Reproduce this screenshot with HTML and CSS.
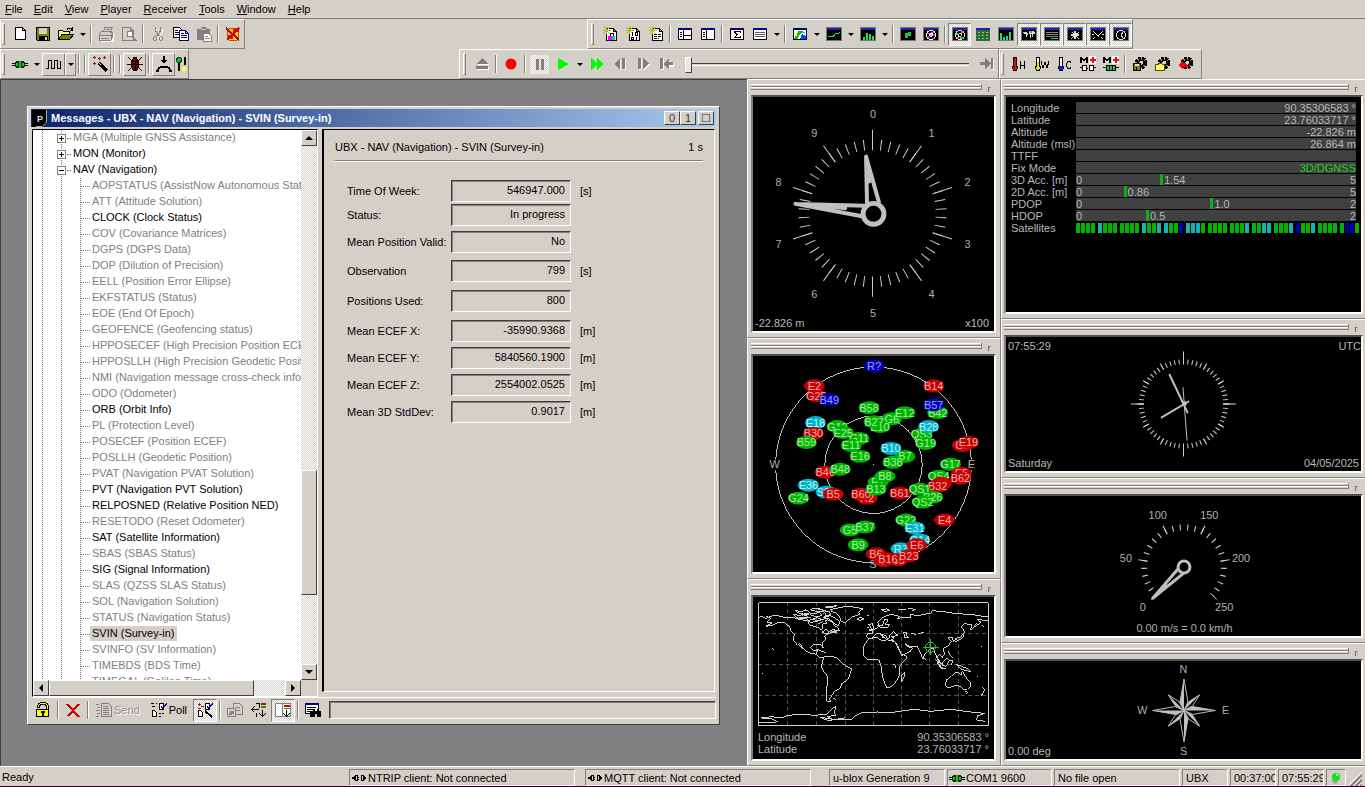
FILE: index.html
```html
<!DOCTYPE html>
<html lang="en">
<head>
<meta charset="utf-8">
<title>u-center</title>
<link rel="stylesheet" href="styles.css">
</head>
<body>
<svg class="sprite" aria-hidden="true">
  <symbol id="new" viewBox="0 0 16 16"><path fill="#fff" stroke="#000" d="M3.500 1.500h7l3 3v9h-10zM10.500 1.500v3h3"/></symbol>
  <symbol id="save" viewBox="0 0 16 16"><path fill="#808000" stroke="#000" d="M1.500 1.500h13v13h-12l-1-1z"/><path fill="#d4d0c8" d="M4 2h8v6H4z"/><path d="M4 10h9v5H4z"/><path fill="#d4d0c8" d="M10 11h2v3h-2z"/></symbol>
  <symbol id="open" viewBox="0 0 16 16"><path fill="#ffff80" stroke="#000" d="M.5 13.500v-9h4l1 1h6v3"/><path fill="#808000" stroke="#000" d="M.5 13.500l3.500-5h11.500l-4 5z"/><path fill="none" stroke="#000" d="M9 3.500c1-2 3-2 5 0M14.500 1v3H12"/></symbol>
  <symbol id="print" viewBox="0 0 16 16"><path fill="#fff" d="M1 8l3-2h10l2 2v6l-2 2H3l-2-2z"/><path fill="#d4d0c8" stroke="#808080" d="M5.500 5.500l1.500-4h7l-2 5M1.500 7.500l2-2h10l1 2v4l-2 3h-11zM1 9.500h12M3 12.500h8M13 8v5M7.500 3.500h4"/></symbol>
  <symbol id="preview" viewBox="0 0 16 16"><path fill="#d4d0c8" stroke="#808080" d="M1.500 1.500h8l3 3v10h-11zM9.500 1.500v3h3"/><circle cx="9" cy="8" r="3" fill="#fff" stroke="#808080"/><path stroke="#808080" stroke-width="2" d="M11 10l4 5"/></symbol>
  <symbol id="cut" viewBox="0 0 16 16"><path fill="none" stroke="#fff" d="M5 2l1 4 4 6M12 2l-1 4-5 6" transform="translate(1 1)"/><path fill="none" stroke="#808080" d="M5.500 1v4l4 5M10.500 1v4l-4 5"/><g fill="none" stroke="#808080"><ellipse cx="5" cy="12.500" rx="1.500" ry="2"/><ellipse cx="11" cy="12.500" rx="1.500" ry="2"/></g></symbol>
  <symbol id="copy" viewBox="0 0 16 16"><path fill="#fff" stroke="#000" d="M.5 1.500h6l2 2v8h-8z"/><path stroke="#000" d="M2 4.500h3M2 6.500h5M2 8.500h5"/><path fill="#fff" stroke="#000080" d="M6.500 4.500h6l3 3v7h-9zM12.500 4.500v3h3"/><path stroke="#000080" d="M8 7.500h3M8 9.500h6M8 11.500h6"/></symbol>
  <symbol id="paste" viewBox="0 0 16 16"><path fill="#808080" d="M1 3h3l2-2h3l2 2h3v5H9v6H1z"/><path fill="#d4d0c8" d="M5 3h5v1H5z"/><path fill="#fff" stroke="#808080" d="M7.500 7.500h5l3 3v5h-8zM9 10.500h3M9 12.500h5"/></symbol>
  <symbol id="clear" viewBox="0 0 16 16"><path fill="#ffd800" stroke="#a06000" d="M2.500 4.500l2-2h7l2 2v8l-2 2h-7l-2-2z"/><path fill="#f00" d="M8 3h6v3H8zM3 9h5v4H3z"/><path stroke="#d00000" stroke-width="2" d="M1 2l13 12M14 2L2 14"/></symbol>
  <symbol id="plug" viewBox="0 0 16 16"><path stroke="#000" d="M0 7.500h16M0 9.500h16"/><path fill="#003800" d="M4 5h8v7H4zM3 6h10v5H3z"/><path fill="#30b040" d="M4 7h2v3H4zM7 5h2v7H7zM10 7h2v3h-2z"/></symbol>
  <symbol id="wave" viewBox="0 0 16 16"><path fill="none" stroke="#000" d="M0 12.500h2.500v-8h3v8h3v-8h3v8h3v-8"/></symbol>
  <symbol id="wand" viewBox="0 0 16 16"><path stroke="#000" stroke-width="3" d="M7 7l8 8"/><path fill="#fff" d="M7 7h1v1h1v1H8V8H7z"/><path fill="none" stroke="#802020" d="M2 0v3M.5 1.500h3M7 1v3M5.500 2.500h3M12 0v3M10.500 1.500h3M2 6v3M.5 7.500h3"/></symbol>
  <symbol id="bug" viewBox="0 0 16 16"><path stroke="#000" d="M1 1l4 4M15 1l-4 4M0 8.500h4M12 8.500h4M1 15l4-4M15 15l-4-4"/><path fill="#800000" stroke="#000" d="M5.500 4.500l1-3h3l1 3 1 2v5l-2 3h-3l-2-3v-5zM4.500 8.500h7M8.500 5v9M5 5.500h6"/></symbol>
  <symbol id="tray" viewBox="0 0 16 16"><path d="M7 0h2v4H7zM5 4h6v1h-1v1H9v1H7V6H6V5H5z"/><path d="M4 10h8v2H4zM2 11h2v2H2zM12 11h2v2h-2zM0 14h3v2H0zM13 14h3v2h-3zM1 13h2v1H1zM13 13h2v1h-2z"/></symbol>
  <symbol id="keys" viewBox="0 0 16 16"><path stroke="#000" stroke-width="2" d="M4 2v13M10 1v8"/><circle cx="4" cy="4" r="2.500" fill="#30b040" stroke="#004000"/><circle cx="9" cy="13" r="2.500" fill="#ff4"/></symbol>
  <symbol id="newpkt" viewBox="0 0 16 16"><path fill="#fff" stroke="#000" d="M4.500 2.500h7l3 3v9h-10zM11.500 2.500v3h3"/><path fill="none" stroke="#b8b820" d="M4.500 0v8M.5 4.500h8M1 1l7 7M8 1L1 8"/></symbol>
  <symbol id="newmsg" viewBox="0 0 16 16"><use href="#newpkt"/><path fill="none" stroke="#000" d="M8.500 10V7.500h3V10"/><path fill="#f0f" d="M6 10h4v4H6z"/><path fill="#0cc" d="M10 10h3v4h-3z"/></symbol>
  <symbol id="newbin" viewBox="0 0 16 16"><use href="#newpkt"/><path fill="none" stroke="#000" d="M7.500 6v4M10.500 6.500h2v3h-2zM6.500 11.500h2v2h-2zM11.500 11v3"/></symbol>
  <symbol id="newtxt" viewBox="0 0 16 16"><use href="#newpkt"/><path stroke="#000" stroke-dasharray="3 1" d="M6 8.500h7M6 10.500h7M6 12.500h5"/></symbol>
  <symbol id="win" viewBox="0 0 16 16"><path fill="#fff" stroke="#000" d="M1.500 2.500h13v11h-13z"/><path fill="#000090" d="M1 2h14v2H1z"/></symbol>
  <symbol id="split" viewBox="0 0 16 16"><use href="#win"/><path stroke="#000" d="M6.500 4v9M7 9.500h8M3 6.500h2M3 8.500h2M3 10.500h2"/></symbol>
  <symbol id="side" viewBox="0 0 16 16"><use href="#win"/><path stroke="#000" d="M6.500 4v9M3 6.500h2M3 8.500h2M3 10.500h2"/></symbol>
  <symbol id="sum" viewBox="0 0 16 16"><use href="#win"/><path d="M5 5h7v2h-1V6H7v1h1v1h1v1H8v1H7v1h4v-1h1v2H5v-1h1v-1h1V8H6V7H5z"/></symbol>
  <symbol id="list" viewBox="0 0 16 16"><use href="#win"/><path stroke="#606060" d="M3 6.500h10M3 8.500h10M3 10.500h10"/></symbol>
  <symbol id="dark" viewBox="0 0 16 16"><path stroke="#777" d="M.5 1.500h15v13H.5z"/><path fill="#2020b0" d="M1 2h14v2H1z"/></symbol>
  <symbol id="mapc" viewBox="0 0 16 16"><use href="#win"/><path fill="#20b020" d="M2 13l4-8h5l-4 4-1 4z"/><path fill="#ff0" d="M3 10l2-4h1l-2 5z"/><path fill="#04f" d="M8 13l2-5 4 2v3z"/><path fill="#0cc" d="M10 6h3v1h-3z"/></symbol>
  <symbol id="line" viewBox="0 0 16 16"><use href="#dark"/><path fill="none" stroke="#20e050" d="M2 11l3-1 2 1 3-4 2 1 2-2"/></symbol>
  <symbol id="hist" viewBox="0 0 16 16"><use href="#dark"/><path stroke="#20e050" stroke-width="2" d="M4 14v-3M7 14V7M10 14V8M13 14v-4"/></symbol>
  <symbol id="cam" viewBox="0 0 16 16"><use href="#dark"/><path fill="#20c040" d="M5 7h3V6h3v4H8v2H5z"/><path stroke="#0cc" d="M6 8.500h2"/></symbol>
  <symbol id="sky" viewBox="0 0 16 16"><use href="#dark"/><circle cx="8" cy="9" r="4.500" fill="none" stroke="#ddd"/><circle cx="8" cy="9" r="1.500" fill="none" stroke="#ddd"/><path stroke="#20e050" stroke-width="2" d="M4 8h2M8 12h4"/><path stroke="#f44" stroke-width="2" d="M9 6h2M5 12h2"/></symbol>
  <symbol id="skyr" viewBox="0 0 16 16"><use href="#dark"/><circle cx="8" cy="9" r="4.500" fill="#000" stroke="#fff"/><circle cx="8" cy="9" r="2" fill="#fff"/><path stroke="#f44" d="M4 7.500h3M9 12.500h3M8 6.500h3M7 9.500h2"/><path stroke="#44f" stroke-width="2" d="M5 11h2M10 9h2"/></symbol>
  <symbol id="grid" viewBox="0 0 16 16"><path fill="#207030" stroke="#555" d="M1.500 2.500h13v12h-13z"/><path fill="#2020b0" d="M1 2h14v2H1z"/><path stroke="#7c8" stroke-dasharray="2 2" d="M3 6.500h10M3 9.500h10M3 12.500h10"/><path fill="#c33" d="M7 7h2v2H7z"/></symbol>
  <symbol id="bars" viewBox="0 0 16 16"><use href="#dark"/><path stroke="#20e050" stroke-width="2" d="M3 14V7M6 14v-3M12 14V6"/><path stroke="#2cc" stroke-width="2" d="M9 14v-4"/></symbol>
  <symbol id="world" viewBox="0 0 16 16"><use href="#dark"/><path fill="#ddd" d="M2 6h4v1h1v2H6v2H5V8H3V7H2zM8 5h5v1h1v2h-2v3h-1V8h-1v4H9V8H8z"/><path fill="#2c4" d="M9 5h2v2H9z"/></symbol>
  <symbol id="rows" viewBox="0 0 16 16"><use href="#dark"/><path stroke="#888" d="M2 6.500h12M2 8.500h12M2 10.500h12"/><path stroke="#2d4" d="M7 12.500h7"/></symbol>
  <symbol id="rose" viewBox="0 0 16 16"><use href="#dark"/><path fill="#ddd" d="M8 3l1 4 3-1-2 2 4 1-4 1 2 3-3-2-1 4-1-4-3 2 2-3-4-1 4-1-2-2 3 1z"/></symbol>
  <symbol id="dial" viewBox="0 0 16 16"><use href="#dark"/><path stroke="#ddd" d="M3 5l5 5M13 5l-5 5M3 13l2-2M13 13l-2-2M8.500 10v1M2 8.500h2M12 8.500h2"/></symbol>
  <symbol id="clock" viewBox="0 0 16 16"><use href="#dark"/><circle cx="8" cy="9" r="4.500" fill="none" stroke="#ddd"/><path fill="none" stroke="#ddd" d="M10 6L8 9l2 3"/></symbol>
  <symbol id="eject" viewBox="0 0 16 16"><path fill="#fff" d="M3 9l6-6 6 6zM3 11h12v3H3z"/><path fill="#808080" d="M2 8l6-6 6 6zM2 10h12v3H2z"/></symbol>
  <symbol id="rec" viewBox="0 0 16 16"><circle cx="8" cy="8" r="5.500" fill="#f00"/></symbol>
  <symbol id="pause" viewBox="0 0 16 16"><path fill="#808080" d="M4 3h3v11H4zM9 3h3v11H9z"/></symbol>
  <symbol id="play" viewBox="0 0 16 16"><path fill="#0f0" d="M3 2l11 6-11 6z"/></symbol>
  <symbol id="ff" viewBox="0 0 16 16"><path fill="#0f0" d="M2 2l6 5V2l6 6-6 6V9l-6 5z"/></symbol>
  <symbol id="back" viewBox="0 0 16 16"><path fill="#fff" d="M9 14L3 9l6-6zM11 3h3v11h-3z"/><path fill="#808080" d="M8 13L2 8l6-6zM10 2h3v11h-3z"/></symbol>
  <symbol id="fwd" viewBox="0 0 16 16"><path fill="#fff" d="M4 3h3v11H4zM9 14V3l6 6z"/><path fill="#808080" d="M3 2h3v11H3zM8 13V2l6 6z"/></symbol>
  <symbol id="home" viewBox="0 0 16 16"><path fill="#fff" d="M3 3h3v11H3zM7 9l5-5v3h4v4h-4v3z"/><path fill="#808080" d="M2 2h3v11H2zM5 8l6-6v4h4v3h-4v4z"/></symbol>
  <symbol id="end" viewBox="0 0 16 16"><path fill="#fff" d="M13 3h2v11h-2z"/><path fill="#808080" d="M12 2h2v11h-2zM12 8L6 2v4H1v3h5v4z"/></symbol>
  <symbol id="thot" viewBox="0 0 16 16"><path fill="#d01010" stroke="#000" d="M2.500 1.500h3v8l1 2-1 3h-3l-1-3 1-2z"/><path fill="none" stroke="#000" d="M9.500 5v8M13.500 5v8M9 9.500h5"/></symbol>
  <symbol id="twarm" viewBox="0 0 16 16"><path fill="#e8e020" stroke="#000" d="M2.500 1.500h3v8l1 2-1 3h-3l-1-3 1-2z"/><path fill="#fff" d="M3 2h2v4H3z"/><path fill="none" stroke="#000" d="M7 5l2 7 2-6 2 6 2-7"/></symbol>
  <symbol id="tcold" viewBox="0 0 16 16"><path fill="#fff" stroke="#000" d="M2.500 1.500h3v8l1 2-1 3h-3l-1-3 1-2z"/><path fill="#1020c0" d="M2 10h4v4H2z"/><path fill="none" stroke="#000" d="M14 6.500l-1-1h-2l-1.500 2v3l1.500 2h2l1-1"/></symbol>
  <symbol id="mred" viewBox="0 0 16 16"><path d="M0 1h2v1h1v1h2V2h1V1h2v6H6V4H5v1H3V4H2v3H0z"/><path fill="#fff" d="M9 0h7v8H9z"/><path fill="#f00" d="M12 1h2v2h2v2h-2v2h-2V5h-2V3h2z"/></symbol>
  <symbol id="moff" viewBox="0 0 16 16"><use href="#mred"/><path fill="#fff" stroke="#000" d="M0 11.500h3M2.500 9.500h4v5h-4zM9.500 9.500h4v5h-4zM13 11.500h3M6 12.500h2"/></symbol>
  <symbol id="mon" viewBox="0 0 16 16"><use href="#mred"/><path fill="#2b4" stroke="#000" d="M0 11.500h3M13 11.500h3M3.500 9.500h9v5h-9zM6.500 9v6M9.500 9v6"/></symbol>
  <symbol id="gear" viewBox="0 0 16 16"><circle cx="9" cy="7" r="5" fill="#888" stroke="#000" stroke-width="3" stroke-dasharray="3 1"/><circle cx="9" cy="7" r="2.500" fill="#d4d0c8" stroke="#000"/></symbol>
  <symbol id="gsave" viewBox="0 0 16 16"><use href="#gear"/><path fill="#808000" stroke="#000" d="M1.500 7.500h7v7h-7zM4.500 11v3"/><path fill="#ddd" d="M3 8h4v2H3z"/></symbol>
  <symbol id="gopen" viewBox="0 0 16 16"><use href="#gear"/><path fill="#ffff60" stroke="#555500" d="M.5 8.500h3l1-1h2l1 1h2v6h-9z"/></symbol>
  <symbol id="gback" viewBox="0 0 16 16"><use href="#gear"/><path fill="#f00" d="M0 9l5-4v2h3l3 6-4-2H5v2z"/></symbol>
  <symbol id="lock" viewBox="0 0 16 16"><path fill="#000" d="M5 0h6v1h2v2h1v5h-3V4h-1V3H6v1H5v2H2V3h1V1h2z"/><path fill="#ff0" d="M5 1h6v1h1v1h1v5h-1V3h-1V2H5v1H4v2H3V3h1V2h1z"/><path fill="#ff0" stroke="#000" d="M1.500 7.500h12v7h-12z"/><path d="M6 9h4v2H9v3H7v-3H6z"/></symbol>
  <symbol id="del" viewBox="0 0 16 16"><path stroke="#d00000" stroke-width="2" d="M2 2l12 13M14 2L3 14"/></symbol>
  <symbol id="send" viewBox="0 0 16 16"><path fill="#d4d0c8" stroke="#808080" d="M5.500 1.500h7l3 3v10h-10zM7 4.500h5M7 6.500h6M7 8.500h6M7 10.500h6M7 12.500h6M0 2.500h3M1 5.500h3M0 8.500h4M1 11.500h3M0 14.500h3"/></symbol>
  <symbol id="poll" viewBox="0 0 16 16"><path fill="none" stroke="#000" stroke-dasharray="3 2" d="M0 1.500h6M1 4.500h5"/><path fill="#fff" stroke="#000" d="M1.500 8.500h2l2 2v4h-4zM8.500 1.500h4v6h-4z"/><path fill="#0000a0" d="M10 4h1v1h1V4h1V3h1V2h1V1h1v2h-1v1h-1v1h-1v1h-1v1h-1V6h-1z"/><path stroke="#000" stroke-dasharray="2 1" d="M8 11.500h6M8 14.500h3"/></symbol>
  <symbol id="auto" viewBox="0 0 16 16"><path fill="#fff" stroke="#000" d="M1.500 8.500h2l2 2v4h-4zM8.500 1.500h4v6h-4z"/><path fill="#0000a0" d="M10 4h1v1h1V4h1V3h1V2h1V1h1v2h-1v1h-1v1h-1v1h-1v1h-1V6h-1z"/><path stroke="#000" stroke-width="2" d="M8 9l7 6"/><path stroke="#802020" d="M1 2.500h3M4 4.500h3M1 6.500h3M2.500 1v3"/></symbol>
  <symbol id="multi" viewBox="0 0 16 16"><path fill="#d4d0c8" stroke="#808080" d="M6.500 1.500h6l3 3v8h-9zM9 5.500h4M9 8.500h4"/><path fill="#d4d0c8" stroke="#808080" d="M.5 6.500h8v8h-8z"/><path fill="#808080" d="M3 9h4v3H5v1H2v-2h1z"/></symbol>
  <symbol id="insert" viewBox="0 0 16 16"><path fill="none" stroke="#000" d="M8.500 1v5M5 1.500h3M0 7.500h8M3.500 4.500l-3 3 3 3M11.500 8v7M8.500 11.500l3 3 3-3M5 10.500v4"/><path stroke="#d00" stroke-width="2" d="M10 2h5"/><path stroke="#0a0" stroke-width="2" d="M10 5h5"/></symbol>
  <symbol id="append" viewBox="0 0 16 16"><path fill="#fff" stroke="#808080" d="M.5 1.500h15v13H.5zM7.500 1v13"/><path stroke="#d00" stroke-width="2" d="M9 4h6"/><path stroke="#0a0" d="M9 6.500h6"/><path fill="none" stroke="#000" d="M11.500 8v7M8.500 11.500l3 3 3-3"/></symbol>
  <symbol id="find" viewBox="0 0 16 16"><path fill="#fff" stroke="#000" d="M.5 1.500h13v10H.5z"/><path fill="#000080" d="M0 1h14v2H0z"/><path stroke="#000" d="M2 5.500h9M2 7.500h6M2 9.500h3"/><path d="M5 9h3V7h2v2h2V7h2v2h2v6h-4v-3h-2v3H5z"/></symbol>
  <symbol id="unplug" viewBox="0 0 16 16"><path d="M1 7h2V6h1V5h2v1H5v4h1v1H4v-1H3V9H1zM6 5h1v2h1v1H7v1h1v1H7v1H6zM10 5h1v6h-1zM11 5h2v1h1v1h1v2h-1v1h-1v1h-2v-1h1V6h-1z"/></symbol>
  <symbol id="led" viewBox="0 0 16 16"><path fill="#9a9" d="M3 10l3 4 4-1-2-4z"/><circle cx="8" cy="7" r="4" fill="#10e020"/><path fill="#cfc" d="M8 4h2v2H8z"/></symbol>
  <symbol id="sat" overflow="visible"><ellipse rx="10.500" ry="6.500"/></symbol>
</svg>

<nav class="menu">
  <button><u>F</u>ile</button><button><u>E</u>dit</button><button><u>V</u>iew</button><button><u>P</u>layer</button><button><u>R</u>eceiver</button><button><u>T</u>ools</button><button><u>W</u>indow</button><button><u>H</u>elp</button>
</nav>

<div class="bars">
  <div class="bar" role="toolbar" aria-label="File">
    <i class="grip"></i>
    <button class="tb" aria-label="New"><svg><use href="#new"/></svg></button>
    <button class="tb" aria-label="Save"><svg><use href="#save"/></svg></button>
    <button class="tb" aria-label="Open"><svg><use href="#open"/></svg></button><button class="drop" aria-label="Recent"></button>
    <i class="sep"></i>
    <button class="tb" aria-label="Print"><svg><use href="#print"/></svg></button>
    <button class="tb" aria-label="Preview"><svg><use href="#preview"/></svg></button>
    <i class="sep"></i>
    <button class="tb" aria-label="Cut"><svg><use href="#cut"/></svg></button>
    <button class="tb" aria-label="Copy"><svg><use href="#copy"/></svg></button>
    <button class="tb" aria-label="Paste"><svg><use href="#paste"/></svg></button>
    <i class="sep"></i>
    <button class="tb" aria-label="Clear"><svg><use href="#clear"/></svg></button>
  </div>
  <div class="bar views" role="toolbar" aria-label="Views">
    <i class="grip"></i>
    <button class="tb" aria-label="Packet console"><svg><use href="#newmsg"/></svg></button>
    <button class="tb" aria-label="Binary console"><svg><use href="#newbin"/></svg></button>
    <button class="tb" aria-label="Text console"><svg><use href="#newtxt"/></svg></button>
    <i class="sep"></i>
    <button class="tb" aria-label="Messages"><svg><use href="#split"/></svg></button>
    <button class="tb" aria-label="Configuration"><svg><use href="#side"/></svg></button>
    <i class="sep"></i>
    <button class="tb" aria-label="Statistics"><svg><use href="#sum"/></svg></button>
    <button class="tb" aria-label="Table"><svg><use href="#list"/></svg></button><button class="drop" aria-label="Table list"></button>
    <i class="sep"></i>
    <button class="tb" aria-label="Map"><svg><use href="#mapc"/></svg></button><button class="drop" aria-label="Map list"></button>
    <button class="tb" aria-label="Chart"><svg><use href="#line"/></svg></button><button class="drop" aria-label="Chart list"></button>
    <button class="tb" aria-label="Histogram"><svg><use href="#hist"/></svg></button><button class="drop" aria-label="Histogram list"></button>
    <i class="sep"></i>
    <button class="tb" aria-label="Camera"><svg><use href="#cam"/></svg></button>
    <button class="tb" aria-label="Deviation"><svg><use href="#skyr"/></svg></button>
    <i class="sep"></i>
    <button class="tb on" aria-label="Sky"><svg><use href="#sky"/></svg></button>
    <button class="tb" aria-label="Signals"><svg><use href="#grid"/></svg></button>
    <button class="tb" aria-label="Levels"><svg><use href="#bars"/></svg></button>
    <button class="tb on" aria-label="World"><svg><use href="#world"/></svg></button>
    <button class="tb on" aria-label="Data"><svg><use href="#rows"/></svg></button>
    <button class="tb on" aria-label="Compass"><svg><use href="#rose"/></svg></button>
    <button class="tb on" aria-label="Speed"><svg><use href="#dial"/></svg></button>
    <button class="tb on" aria-label="Clock"><svg><use href="#clock"/></svg></button>
  </div>
</div>

<div class="bars">
  <div class="bar" role="toolbar" aria-label="Connection">
    <i class="grip"></i>
    <button class="tb" aria-label="Connect"><svg><use href="#plug"/></svg></button><button class="drop" aria-label="Ports"></button>
    <button class="tb up" aria-label="Baud rate"><svg><use href="#wave"/></svg></button><button class="drop up" aria-label="Baud rates"></button>
    <i class="sep"></i><i class="sep"></i>
    <button class="tb up" aria-label="Autobaud"><svg><use href="#wand"/></svg></button>
    <i class="sep"></i><i class="sep"></i>
    <button class="tb up" aria-label="Debug"><svg><use href="#bug"/></svg></button>
    <i class="sep"></i>
    <button class="tb up" aria-label="Download"><svg><use href="#tray"/></svg></button>
    <button class="tb half" aria-label="Settings"><svg><use href="#keys"/></svg></button>
  </div>
  <div class="bar player" role="toolbar" aria-label="Player">
    <i class="grip"></i>
    <button class="tb" aria-label="Eject"><svg><use href="#eject"/></svg></button>
    <i class="sep"></i>
    <button class="tb" aria-label="Record"><svg class="smooth"><use href="#rec"/></svg></button>
    <i class="sep"></i>
    <button class="tb pressed" aria-label="Pause"><svg><use href="#pause"/></svg></button>
    <button class="tb" aria-label="Play"><svg><use href="#play"/></svg></button><button class="drop" aria-label="Play speed"></button>
    <button class="tb" aria-label="Fast forward"><svg><use href="#ff"/></svg></button>
    <button class="tb" aria-label="Step back"><svg><use href="#back"/></svg></button>
    <button class="tb" aria-label="Step forward"><svg><use href="#fwd"/></svg></button>
    <button class="tb" aria-label="To start"><svg><use href="#home"/></svg></button>
    <input class="seek" type="range" value="0" aria-label="Position">
    <button class="tb" aria-label="To end"><svg><use href="#end"/></svg></button>
  </div>
  <div class="bar starts" role="toolbar" aria-label="Receiver">
    <i class="grip"></i>
    <button class="tb" aria-label="Hot start"><svg><use href="#thot"/></svg></button>
    <button class="tb" aria-label="Warm start"><svg><use href="#twarm"/></svg></button>
    <button class="tb" aria-label="Cold start"><svg><use href="#tcold"/></svg></button>
    <button class="tb" aria-label="Store offline"><svg><use href="#moff"/></svg></button>
    <button class="tb" aria-label="Store online"><svg><use href="#mon"/></svg></button>
    <i class="sep"></i>
    <button class="tb" aria-label="Save configuration"><svg><use href="#gsave"/></svg></button>
    <button class="tb" aria-label="Load configuration"><svg><use href="#gopen"/></svg></button>
    <button class="tb" aria-label="Revert configuration"><svg><use href="#gback"/></svg></button>
  </div>
</div>

<main class="work">
  <div class="desk">
    <section class="window">
      <header class="title">
        <svg class="logo" viewBox="0 0 15 17"><path d="M0 0h15v12l-4 5H0z"/><path fill="none" stroke="#aaa" d="M14.500 0v12l-4 4.500H4"/><text x="5" y="12">P</text></svg>
        <h1>Messages - UBX - NAV (Navigation) - SVIN (Survey-in)</h1>
        <button>0</button><button>1</button><button class="close">☐</button>
      </header>
      <div class="panes">
        <div class="treebox">
          <div class="clip">
            <ul class="tree">
              <li class="off"><b class="plus"></b>MGA (Multiple GNSS Assistance)</li>
              <li><b class="plus"></b>MON (Monitor)</li>
              <li><b></b>NAV (Navigation)</li>
              <li class="branch"><ul>
                <li class="off">AOPSTATUS (AssistNow Autonomous Status)</li>
                <li class="off">ATT (Attitude Solution)</li>
                <li>CLOCK (Clock Status)</li>
                <li class="off">COV (Covariance Matrices)</li>
                <li class="off">DGPS (DGPS Data)</li>
                <li class="off">DOP (Dilution of Precision)</li>
                <li class="off">EELL (Position Error Ellipse)</li>
                <li class="off">EKFSTATUS (Status)</li>
                <li class="off">EOE (End Of Epoch)</li>
                <li class="off">GEOFENCE (Geofencing status)</li>
                <li class="off">HPPOSECEF (High Precision Position ECEF)</li>
                <li class="off">HPPOSLLH (High Precision Geodetic Position)</li>
                <li class="off">NMI (Navigation message cross-check information)</li>
                <li class="off">ODO (Odometer)</li>
                <li>ORB (Orbit Info)</li>
                <li class="off">PL (Protection Level)</li>
                <li class="off">POSECEF (Position ECEF)</li>
                <li class="off">POSLLH (Geodetic Position)</li>
                <li class="off">PVAT (Navigation PVAT Solution)</li>
                <li>PVT (Navigation PVT Solution)</li>
                <li>RELPOSNED (Relative Position NED)</li>
                <li class="off">RESETODO (Reset Odometer)</li>
                <li>SAT (Satellite Information)</li>
                <li class="off">SBAS (SBAS Status)</li>
                <li>SIG (Signal Information)</li>
                <li class="off">SLAS (QZSS SLAS Status)</li>
                <li class="off">SOL (Navigation Solution)</li>
                <li class="off">STATUS (Navigation Status)</li>
                <li><span class="sel">SVIN (Survey-in)</span></li>
                <li class="off">SVINFO (SV Information)</li>
                <li class="off">TIMEBDS (BDS Time)</li>
                <li class="off">TIMEGAL (Galileo Time)</li>
              </ul></li>
            </ul>
          </div>
          <div class="vscroll"><button class="arrow up-a" aria-label="Up"></button><i class="thumb"></i><button class="arrow down-a" aria-label="Down"></button></div>
          <div class="hscroll"><button class="arrow left-a" aria-label="Left"></button><i class="thumb"></i><button class="arrow right-a" aria-label="Right"></button></div>
        </div>
        <form class="detail">
          <div class="head"><span>UBX - NAV (Navigation) - SVIN (Survey-in)</span><span>1 s</span></div>
          <div class="fields">
            <div class="row r24"><label for="tow">Time Of Week:</label><input id="tow" readonly value="546947.000"><span>[s]</span></div>
            <div class="row"><label for="st">Status:</label><input id="st" readonly value="In progress"></div>
            <div class="row r29"><label for="mpv">Mean Position Valid:</label><input id="mpv" readonly value="No"></div>
            <div class="row r30"><label for="obs">Observation</label><input id="obs" readonly value="799"><span>[s]</span></div>
            <div class="row r30"><label for="pu">Positions Used:</label><input id="pu" readonly value="800"></div>
            <div class="row"><label for="ex">Mean ECEF X:</label><input id="ex" readonly value="-35990.9368"><span>[m]</span></div>
            <div class="row"><label for="ey">Mean ECEF Y:</label><input id="ey" readonly value="5840560.1900"><span>[m]</span></div>
            <div class="row"><label for="ez">Mean ECEF Z:</label><input id="ez" readonly value="2554002.0525"><span>[m]</span></div>
            <div class="row"><label for="sd">Mean 3D StdDev:</label><input id="sd" readonly value="0.9017"><span>[m]</span></div>
          </div>
        </form>
      </div>
      <footer class="wbar">
        <button class="tb" aria-label="Lock"><svg><use href="#lock"/></svg></button>
        <i class="sep"></i>
        <button class="tb" aria-label="Delete"><svg><use href="#del"/></svg></button>
        <i class="sep"></i>
        <button class="tb text dim"><svg><use href="#send"/></svg>Send</button>
        <button class="tb text"><svg><use href="#poll"/></svg>Poll</button>
        <button class="tb on" aria-label="Auto poll"><svg><use href="#auto"/></svg></button>
        <i class="sep"></i>
        <button class="tb" aria-label="Multiple"><svg><use href="#multi"/></svg></button>
        <button class="tb" aria-label="Insert"><svg><use href="#insert"/></svg></button>
        <button class="tb on" aria-label="Append"><svg><use href="#append"/></svg></button>
        <i class="sep"></i>
        <button class="tb" aria-label="Find"><svg><use href="#find"/></svg></button>
        <input class="query" aria-label="Search">
      </footer>
    </section>
  </div>

  <div class="dock narrow">
    <section class="panel p258">
      <header><i></i><button>r</button></header>
      <div class="face">
        <svg class="draw" viewBox="753 97 241 235">
          <g class="lbl"><text x="873" y="118">0</text><text x="932" y="137">1</text><text x="968" y="187">2</text><text x="968" y="249">3</text><text x="932" y="299">4</text><text x="873" y="318">5</text><text x="814" y="299">6</text><text x="778" y="249">7</text><text x="778" y="187">8</text><text x="814" y="137">9</text></g>
          <g transform="translate(872.500 214) rotate(-90)" class="ticks"><circle r="69" stroke-width="11" pathLength="500" stroke-dasharray="1.100 8.900" stroke-dashoffset=".55"/><circle r="74" stroke-width="20" pathLength="500" stroke-dasharray="1 49" stroke-dashoffset=".5"/></g>
          <g class="hand"><path d="M795 204.500L865 206.500M795 204.500L862 217M820 206L845 209M866 157L867 204M866 157L879 203M867 168L869 182" stroke-width="4"/><circle cx="873.500" cy="214.500" r="10.500" fill="#000" stroke-width="5"/></g>
        </svg>
        <span class="bl">-22.826 m</span><span class="br inset">x100</span>
      </div>
    </section>
    <section class="panel p242">
      <header><i></i><button>r</button></header>
      <div class="face">
        <svg class="draw" viewBox="753 356 241 218">
          <g class="ring"><circle cx="873.500" cy="465.500" r="98.500"/><circle cx="873.500" cy="465.500" r="49"/><path d="M873 465.500h1"/></g>
          <g class="lbl"><rect x="767" y="460" width="13" height="11"/><text x="774" y="469">W</text><rect x="967" y="460" width="10" height="11"/><text x="972" y="469">E</text><text x="873" y="569">S</text></g>
          <g class="sats">
            <g class="r" transform="translate(816 396)"><use href="#sat"/><text y="4">G25</text></g>
            <g class="r" transform="translate(814 386)"><use href="#sat"/><text y="4">E2</text></g>
            <g class="b" transform="translate(829 400)"><use href="#sat"/><text y="4">B49</text></g>
            <g class="b" transform="translate(874 366)"><use href="#sat"/><text y="4">R?</text></g>
            <g class="r" transform="translate(934 386)"><use href="#sat"/><text y="4">B14</text></g>
            <g class="g" transform="translate(938 413)"><use href="#sat"/><text y="4">B42</text></g>
            <g class="b" transform="translate(934 405)"><use href="#sat"/><text y="4">B57</text></g>
            <g class="g" transform="translate(869 408)"><use href="#sat"/><text y="4">B58</text></g>
            <g class="g" transform="translate(892 419)"><use href="#sat"/><text y="4">G6</text></g>
            <g class="g" transform="translate(905 413)"><use href="#sat"/><text y="4">E12</text></g>
            <g class="g" transform="translate(880 427)"><use href="#sat"/><text y="4">E10</text></g>
            <g class="g" transform="translate(874 422)"><use href="#sat"/><text y="4">B27</text></g>
            <g class="c" transform="translate(815 423)"><use href="#sat"/><text y="4">E18</text></g>
            <g class="r" transform="translate(813 434)"><use href="#sat"/><text y="4">B30</text></g>
            <g class="g" transform="translate(806 443)"><use href="#sat"/><text y="4">B59</text></g>
            <g class="g" transform="translate(837 427)"><use href="#sat"/><text y="4">G12</text></g>
            <g class="g" transform="translate(859 439)"><use href="#sat"/><text y="4">G11</text></g>
            <g class="g" transform="translate(843 433)"><use href="#sat"/><text y="4">E25</text></g>
            <g class="g" transform="translate(851 446)"><use href="#sat"/><text y="4">E11</text></g>
            <g class="g" transform="translate(860 457)"><use href="#sat"/><text y="4">E16</text></g>
            <g class="g" transform="translate(922 435)"><use href="#sat"/><text y="4">QS3</text></g>
            <g class="c" transform="translate(929 427)"><use href="#sat"/><text y="4">B28</text></g>
            <g class="g" transform="translate(926 444)"><use href="#sat"/><text y="4">G19</text></g>
            <g class="r" transform="translate(963 446)"><use href="#sat"/><text y="4">G3</text></g>
            <g class="r" transform="translate(969 443)"><use href="#sat"/><text y="4">E19</text></g>
            <g class="g" transform="translate(905 457)"><use href="#sat"/><text y="4">B7</text></g>
            <g class="c" transform="translate(891 449)"><use href="#sat"/><text y="4">B10</text></g>
            <g class="g" transform="translate(893 463)"><use href="#sat"/><text y="4">B38</text></g>
            <g class="r" transform="translate(825 473)"><use href="#sat"/><text y="4">B46</text></g>
            <g class="g" transform="translate(840 470)"><use href="#sat"/><text y="4">B48</text></g>
            <g class="c" transform="translate(808 486)"><use href="#sat"/><text y="4">E36</text></g>
            <g class="c" transform="translate(826 493)"><use href="#sat"/><text y="4">S27</text></g>
            <g class="r" transform="translate(833 495)"><use href="#sat"/><text y="4">B5</text></g>
            <g class="g" transform="translate(798 499)"><use href="#sat"/><text y="4">G24</text></g>
            <g class="r" transform="translate(867 499)"><use href="#sat"/><text y="4">R2</text></g>
            <g class="r" transform="translate(861 495)"><use href="#sat"/><text y="4">B60</text></g>
            <g class="g" transform="translate(878 483)"><use href="#sat"/><text y="4">E7</text></g>
            <g class="g" transform="translate(885 477)"><use href="#sat"/><text y="4">B8</text></g>
            <g class="g" transform="translate(876 490)"><use href="#sat"/><text y="4">B13</text></g>
            <g class="r" transform="translate(900 494)"><use href="#sat"/><text y="4">B61</text></g>
            <g class="g" transform="translate(951 465)"><use href="#sat"/><text y="4">G17</text></g>
            <g class="g" transform="translate(939 477)"><use href="#sat"/><text y="4">QS4</text></g>
            <g class="r" transform="translate(962 474)"><use href="#sat"/><text y="4">E5</text></g>
            <g class="r" transform="translate(961 479)"><use href="#sat"/><text y="4">B62</text></g>
            <g class="r" transform="translate(942 484)"><use href="#sat"/></g>
            <g class="r" transform="translate(938 487)"><use href="#sat"/><text y="4">B32</text></g>
            <g class="g" transform="translate(920 490)"><use href="#sat"/><text y="4">QS1</text></g>
            <g class="g" transform="translate(933 498)"><use href="#sat"/><text y="4">B26</text></g>
            <g class="g" transform="translate(923 503)"><use href="#sat"/><text y="4">QS2</text></g>
            <g class="r" transform="translate(945 521)"><use href="#sat"/><text y="4">E4</text></g>
            <g class="g" transform="translate(850 531)"><use href="#sat"/><text y="4">G5</text></g>
            <g class="g" transform="translate(865 528)"><use href="#sat"/><text y="4">B37</text></g>
            <g class="g" transform="translate(858 546)"><use href="#sat"/><text y="4">B9</text></g>
            <g class="g" transform="translate(906 521)"><use href="#sat"/><text y="4">G22</text></g>
            <g class="c" transform="translate(915 529)"><use href="#sat"/><text y="4">E31</text></g>
            <g class="c" transform="translate(920 541)"><use href="#sat"/><text y="4">G14</text></g>
            <g class="c" transform="translate(901 550)"><use href="#sat"/><text y="4">R7</text></g>
            <g class="r" transform="translate(917 546)"><use href="#sat"/><text y="4">E6</text></g>
            <g class="r" transform="translate(876 555)"><use href="#sat"/><text y="4">B6</text></g>
            <g class="r" transform="translate(884 562)"><use href="#sat"/><text y="4">C</text></g>
            <g class="r" transform="translate(898 561)"><use href="#sat"/><text y="4">C5</text></g>
            <g class="r" transform="translate(888 560)"><use href="#sat"/><text y="4">B16</text></g>
            <g class="r" transform="translate(909 557)"><use href="#sat"/><text y="4">B23</text></g>
          </g>
        </svg>
      </div>
    </section>
    <section class="panel p187">
      <header><i></i><button>r</button></header>
      <div class="face mapface">
        <svg class="draw map" viewBox="39 75 696 375">
          <path class="mgrid" d="M128 76v374M215 76v374M302 76v374M386 76v374M470 76v374M557 76v374M644 76v374M40 169h696M40 262h696M40 355h696"/>
          <path class="coast" d="M40 122L50 118 64 124 76 117 100 116 125 122 150 122 165 128 190 130 205 126 215 130M64 117L76 124 66 136 82 138 62 148 84 144 100 135 120 138 133 148 140 165 148 172 146 190 158 205 164 198 172 210 182 222 195 228 215 232 225 243 238 240 M164 204L174 215M215 232L218 220 206 222 197 212 205 203 220 204 228 202 236 214 232 200 244 185 240 178 248 172 262 166 276 165 268 158 284 162 278 150 270 146 262 135 250 128 242 130 246 138 232 142 234 154 230 160 222 152 208 148 192 142 190 132M252 163l14-5 8 4-16 3M232 165l12-8 10 8-10 6zM205 222l14-4 16 6 8 3"/>
          <path class="coast" d="M150 100l20 4 12-6 14 8-14 6-20-4zM146 112l18 4 10-4 16 6-12 8-22-4zM196 98l12-4 22 2 8 6-20 2zM196 108l14 2 14-4 8 8-16 6-18-6zM240 92l24-2 12-4-28 2zM240 104l14-2 4 10-14 4zM204 124l14-2 10 4-10 8zM236 120l22-4 14 8 14 10-6 12-12-8-14-12zM170 118l8-8 14 2M158 106l30-8M150 126l26-6 24 2M212 132l20-4 12-4M220 140l14-6M184 124l14 12 12-2M220 96l24 6-10 8"/>
          <path class="coast" d="M258 97L285 92 300 88 330 90 355 95 342 104 346 112 322 120 302 136 290 134 284 118 276 108 262 104zM336 124l14-2 8 4-14 4zM410 98l18-3 8 5-16 3zM462 98l24-2M490 94l26 3-14 3M368 114l4 1"/>
          <path class="coast" d="M238 240L250 240 262 238 280 245 296 262 322 277 316 292 310 308 292 320 285 335 272 342 264 352 254 368 260 374 246 374 244 350 248 320 250 300 236 282 230 268 234 252 238 240M266 366l8 2M208 262h2M82 214l4 5M52 290h2M712 208h2"/>
          <path class="coast" d="M372 186L398 180 404 188 420 192 426 188 452 194 462 215 470 232 486 236 488 242 474 258 464 272 466 295 456 312 444 328 428 334 420 318 414 300 412 278 408 262 404 250 390 248 368 248 356 236 356 212 364 198zM472 296L482 286 480 300 470 316zM446 264h6v8"/>
          <path class="coast" d="M372 186L366 178 370 168 384 170 382 160 392 156 402 150 400 144 408 152 430 150 436 142 422 142 432 128 420 128 414 146 402 144 400 134 420 118 440 112 465 118 458 126 474 120 500 122 498 112 520 116 560 108 565 98 580 103 600 104 640 110 680 112 734 120M734 130L700 128 712 136 690 150 680 158 682 142 660 140 652 150 662 165 650 180 634 184 640 192M372 160L382 156 372 142 384 140 388 156 376 160zM368 152l6-2"/>
          <path class="coast" d="M384 182L392 172 404 168 416 182 424 184 408 170 424 176 430 186 436 182 436 174 448 164 462 176 440 178 450 184 440 188 452 194 460 204M478 165L488 168 486 174 492 182 480 180zM500 168l14 4M520 170l18-4M460 206L472 236 498 224 504 214 492 210 482 200 496 208 520 210 526 222 536 246 544 228 556 216 568 216 576 236 582 252 592 262 578 240 586 232 594 242 602 230 596 216 612 206 622 194 612 182 624 180 628 196 634 186M632 194l12-4 12-8 4-14M540 244l4 3"/>
          <path class="coast" d="M574 246L592 272 606 276 592 276 578 256M594 258L608 244 616 250 606 268 596 266zM612 222l4 12 8 8 4-2M618 250l8 2-6 12M636 262L652 268 672 276 678 284 662 280 650 276zM606 310L622 298 634 286 646 288 652 296 654 282 664 300 678 316 680 328 670 338 658 338 646 328 634 326 612 334 604 326zM662 344l9 3-6 4M716 332l8 8-4 4M720 344l-10 12 6-2M700 300l2 2M690 146l8-6M715 145l6 4"/>
          <path class="coast" d="M40 438L100 436 80 426 48 424 80 420 110 424 130 416 170 413 210 416 246 412 262 396 274 390 268 410 274 416 246 420 264 428 226 422 250 432 300 424 272 430 320 430 326 422 350 408 400 406 440 408 480 402 510 398 560 404 620 398 680 406 722 410 700 418 698 430 722 434"/>
          <path class="frame" d="M41 77h692v371H41z"/>
          <g class="target"><circle cx="559" cy="211" r="15"/><path d="M535 211h48M559 187v48"/></g>
        </svg>
        <dl class="pos"><div><dt>Longitude</dt><dd>90.35306583 °</dd></div><div><dt>Latitude</dt><dd>23.76033717 °</dd></div></dl>
      </div>
    </section>
  </div>

  <div class="dock wide">
    <section class="panel p240">
      <header><i></i><button>r</button></header>
      <div class="face dataface">
        <table class="data">
          <tr><th>Longitude</th><td class="v">90.35306583 °</td></tr>
          <tr><th>Latitude</th><td class="v">23.76033717 °</td></tr>
          <tr><th>Altitude</th><td class="v">-22.826 m</td></tr>
          <tr><th>Altitude (msl)</th><td class="v">26.864 m</td></tr>
          <tr><th>TTFF</th><td class="v"></td></tr>
          <tr><th>Fix Mode</th><td class="v fix">3D/DGNSS</td></tr>
          <tr><th>3D Acc. [m]</th><td><div class="rng"><span>0</span><em style="left:30%">1.54</em><span>5</span></div></td></tr>
          <tr><th>2D Acc. [m]</th><td><div class="rng"><span>0</span><em style="left:17%">0.86</em><span>5</span></div></td></tr>
          <tr><th>PDOP</th><td><div class="rng"><span>0</span><em style="left:48%">1.0</em><span>2</span></div></td></tr>
          <tr><th>HDOP</th><td><div class="rng"><span>0</span><em style="left:25%">0.5</em><span>2</span></div></td></tr>
          <tr><th>Satellites</th><td class="satrow"><div class="satbar">
            <span><i></i><i></i><i></i><i></i></span><span><i class="c"></i><i></i><i></i><i></i></span><span><i></i><i></i><i></i><i></i></span><span><i class="c"></i><i></i><i></i><i class="c"></i></span><span><i class="c"></i><i></i><i></i><i class="b"></i></span><span><i class="c"></i><i class="c"></i><i class="c"></i><i></i></span><span><i></i><i></i><i></i><i></i></span><span><i></i><i></i><i></i><i class="c"></i></span><span><i></i><i></i><i class="c"></i><i class="c"></i></span><span><i></i><i></i><i></i><i class="c"></i></span><span><i class="b"></i><i></i><i></i><i class="c"></i></span><span><i></i><i></i><i></i><i></i></span><span><i></i><i class="b"></i><i class="b"></i><i></i></span>
          </div></td></tr>
        </table>
      </div>
    </section>
    <section class="panel p159">
      <header><i></i><button>r</button></header>
      <div class="face">
        <svg class="draw" viewBox="1006 338 354 135">
          <g transform="translate(1183 405.500) rotate(-90)" class="ticks"><circle r="42.500" stroke-width="5" pathLength="600" stroke-dasharray="2.200 7.800" stroke-dashoffset="1.100"/><circle r="43.500" stroke-width="7" pathLength="600" stroke-dasharray="2.200 47.800" stroke-dashoffset="1.100"/><circle r="46.500" stroke-width="13" pathLength="600" stroke-dasharray="2 148" stroke-dashoffset="1"/></g>
          <g class="hand"><path stroke-width="2" d="M1161 419L1188 403M1169 376L1187 414"/><path stroke-width="1" d="M1182.500 389L1186.500 442"/><circle cx="1184" cy="405" r="2" stroke-width="1" fill="#c0c0c0"/></g>
        </svg>
        <span class="tl">07:55:29</span><span class="tr">UTC</span><span class="bl">Saturday</span><span class="br">04/05/2025</span>
      </div>
    </section>
    <section class="panel p165">
      <header><i></i><button>r</button></header>
      <div class="face">
        <svg class="draw" viewBox="1006 496 354 141">
          <g class="lbl"><text x="1142" y="612">0</text><text x="1125" y="562">50</text><text x="1157" y="519">100</text><text x="1209" y="519">150</text><text x="1241" y="562">200</text><text x="1224" y="612">250</text><text x="1184" y="633">0.00 m/s = 0.0 km/h</text></g>
          <g class="ticks" transform="translate(1183.500 567.500)"><path d="M-28.300 28.300A40 40 0 1 1 28.300 28.300" stroke-width="6" pathLength="250" stroke-dasharray="1.400 8.600" stroke-dashoffset=".7"/><path d="M-29.700 29.700A42 42 0 1 1 29.700 29.700" stroke-width="9" pathLength="250" stroke-dasharray="1.300 48.700" stroke-dashoffset=".65"/></g>
          <g class="hand"><path stroke-width="3" d="M1152 599L1177 570M1152 599L1183 574M1152 599L1165 586"/><circle cx="1183.500" cy="567.500" r="6" stroke-width="3" fill="#000"/></g>
        </svg>
      </div>
    </section>
    <section class="panel p123">
      <header><i></i><button>r</button></header>
      <div class="face">
        <svg class="draw" viewBox="1006 661 354 100">
          <g class="lbl"><text x="1183" y="673">N</text><text x="1183" y="757">S</text><text x="1141" y="715">W</text><text x="1226" y="715">E</text></g>
          <g transform="translate(1183.500 711.500)">
            <g class="star">
              <path d="M0 0L-9-5-16-16-5-9zM0 0L5-9 16-16 9-5zM0 0L9 5 16 16 5 9zM0 0L-5 9-16 16-9 5z"/>
              <path d="M0-32L4-9 0 0-4-9zM32 0L9 4 0 0 9-4zM0 32L-4 9 0 0 4 9zM-32 0L-9-4 0 0-9 4z"/>
            </g>
            <g class="fill"><path d="M0-32L-4-9 0 0zM32 0L9-4 0 0zM0 32L4 9 0 0zM-32 0L-9 4 0 0zM0 0L-16-16-9-5zM0 0L16-16 5-9zM0 0L16 16 9 5zM0 0L-16 16-5 9z"/></g>
          </g>
        </svg>
        <span class="bl">0.00 deg</span>
      </div>
    </section>
  </div>
</main>

<footer class="status">
  <span class="ready">Ready</span>
  <span class="cell w226"><svg><use href="#unplug"/></svg>NTRIP client: Not connected</span>
  <span class="cell w226 gap10"><svg><use href="#unplug"/></svg>MQTT client: Not connected</span>
  <span class="cell w116 gap18">u-blox Generation 9</span>
  <span class="cell w105"><svg><use href="#plug"/></svg>COM1 9600</span>
  <span class="cell w126">No file open</span>
  <span class="cell w46">UBX</span>
  <span class="cell w46">00:37:00</span>
  <span class="cell w46">07:55:29</span>
  <span class="cell w20"><svg class="smooth"><use href="#led"/></svg></span>
  <svg class="size" viewBox="0 0 14 14"><path stroke="#fff" d="M0 14L14 0M5 14l9-9M10 14l4-4"/><path stroke="#808080" stroke-width="2" d="M2 15L15 2M7 15l8-8M12 15l3-3"/></svg>
</footer>
</body>
</html>
```

FILE: styles.css
```css
* { box-sizing: border-box; }
:root {
  --face: #d4d0c8;
  --shade: #808080;
  --check: repeating-conic-gradient(#fff 0 25%, #d4d0c8 0 50%) 0 0 / 2px 2px;
  --dots: repeating-linear-gradient(#808080 0 1px, transparent 1px 2px);
}
body {
  margin: 0;
  height: 100vh;
  display: flex;
  flex-direction: column;
  overflow: hidden;
  background: var(--face);
  border-bottom: 1px solid #2c0018;
  font: 11px/14px "Liberation Sans", Arial, sans-serif;
  color: #000;
}
button, input { font: inherit; color: inherit; margin: 0; padding: 0; border: 0; background: none; border-radius: 0; }
button { flex: none; }
.sprite { position: absolute; width: 0; height: 0; }

.menu { flex: none; display: flex; height: 19px; padding-left: 1px; border-bottom: 1px solid var(--shade); }
.menu button { padding: 0 7px 0 4px; }
.menu button + button { padding-right: 8px; }

/* toolbars */
.bars { flex: none; display: flex; height: 30px; }
.bar {
  display: flex;
  align-items: center;
  border: 1px solid;
  border-color: #fff var(--shade) var(--shade) #fff;
}
.views { margin-left: 342px; }
.player { margin-left: 270px; flex: 0 0 540px; }
.starts { padding-right: 4px; }
.grip { flex: none; width: 3px; height: 22px; margin: 0 3px 0 1px; border: 1px solid; border-color: #fff var(--shade) var(--shade) #fff; }
.player .grip, .views .grip { margin: 0 4px 0 3px; }
.sep { flex: none; width: 2px; height: 18px; margin: 0 2px; border-left: 1px solid var(--shade); border-right: 1px solid #fff; }
.tb { width: 23px; height: 23px; display: flex; align-items: center; justify-content: center; }
.tb svg, .cell svg { flex: none; width: 16px; height: 16px; shape-rendering: crispEdges; }
svg.smooth { shape-rendering: auto; }
.on { background: var(--check); border: 1px solid; border-color: var(--shade) #fff #fff var(--shade); }
.up { border: 1px solid; border-color: #fff var(--shade) var(--shade) #fff; }
.pressed { background: var(--check) content-box; padding: 2px; }
.drop { width: 11px; height: 23px; display: flex; align-items: center; justify-content: center; }
.drop::before { content: ""; border: 3px solid transparent; border-top-color: #000; border-bottom: 0; }
.half { width: 13px; overflow: hidden; justify-content: flex-start; }
.seek { appearance: none; flex: 1; min-width: 0; margin: 0 6px 0 8px; height: 20px; }
.seek::-webkit-slider-runnable-track { height: 3px; background: var(--face); border-top: 1px solid #404040; border-bottom: 1px solid #fff; }
.seek::-webkit-slider-thumb { appearance: none; width: 7px; height: 16px; margin-top: -7px; background: var(--check); border: 1px solid; border-color: #fff #404040 #404040 #fff; }

/* work area */
.work { flex: 1; min-height: 0; display: flex; }
.desk { flex: 1; position: relative; background: #808080; border-top: 1px solid #404040; border-left: 1px solid #404040; }
.window {
  position: absolute;
  left: 26px;
  top: 26px;
  width: 693px;
  height: 619px;
  padding: 2px 3px 0;
  display: flex;
  flex-direction: column;
  background: var(--face);
  border: 1px solid;
  border-color: #fff #404040 #404040 #fff;
}
.title {
  flex: none;
  height: 18px;
  display: flex;
  align-items: center;
  padding: 0 2px 0 1px;
  background: linear-gradient(to right, #0a246a, #a6caf0);
}
.logo { width: 15px; height: 17px; }
.logo text { font: bold 9px "Liberation Sans", sans-serif; fill: #ddd; }
.title h1 { flex: 1; margin: 0 0 0 4px; font-size: 11px; color: #fff; }
.title button { width: 16px; height: 14px; line-height: 12px; color: #333; background: var(--face); border: 1px solid; border-color: #fff #404040 #404040 #fff; }
.title .close { margin-left: 2px; }
.panes { flex: 1; min-height: 0; display: flex; gap: 4px; padding: 2px 1px 0; }
.treebox {
  flex: 0 0 286px;
  display: grid;
  grid-template: 1fr 16px / 1fr 16px;
  min-height: 0;
  background: var(--face);
  border: 1px solid;
  border-color: #000 #fff #fff #000;
}
.clip { overflow: hidden; min-height: 0; min-width: 0; background: #fff; }
.tree, .tree ul { list-style: none; margin: 0; padding: 0; }
.tree { background: var(--dots) 9px 0 / 1px 100% no-repeat, var(--dots) 28px 0 / 1px 100% no-repeat; }
.tree li { position: relative; height: 16px; line-height: 15px; padding-left: 40px; white-space: nowrap; }
.tree .branch { height: auto; padding: 0; }
.tree .branch ul { background: var(--dots) 47px 0 / 1px 100% no-repeat; }
.tree .branch ul li { padding-left: 59px; }
.tree .branch ul li::before { content: ""; position: absolute; left: 48px; top: 8px; width: 9px; border-top: 1px dotted #808080; }
.tree .off { color: #808080; }
.tree b { position: absolute; left: 24px; top: 4px; width: 9px; height: 9px; background: linear-gradient(#000, #000) 1px 3px / 5px 1px no-repeat #fff; border: 1px solid #808080; }
.tree b::after { content: ""; position: absolute; left: 9px; top: 3px; width: 4px; border-top: 1px dotted #808080; }
.tree .plus { background: linear-gradient(#000, #000) 1px 3px / 5px 1px no-repeat, linear-gradient(#000, #000) 3px 1px / 1px 5px no-repeat #fff; }
.sel { display: inline-block; margin-left: -2px; padding: 0 2px; background: var(--face); }
.vscroll, .hscroll { display: flex; background: var(--check); }
.vscroll { flex-direction: column; }
.vscroll .thumb { height: 125px; margin-top: auto; margin-bottom: 69px; }
.hscroll .thumb { width: 205px; margin-right: auto; }
.thumb, .arrow { background: var(--face); border: 1px solid; border-color: #fff #404040 #404040 #fff; }
.arrow { width: 16px; height: 16px; display: flex; align-items: center; justify-content: center; }
.arrow::before { content: ""; border: 4px solid transparent; }
.up-a::before { border-bottom-color: #000; border-top: 0; }
.down-a::before { border-top-color: #000; border-bottom: 0; }
.left-a::before { border-right-color: #000; border-left: 0; }
.right-a::before { border-left-color: #000; border-right: 0; }

.detail { flex: 1; margin-bottom: 5px; padding: 10px 11px 0; border: 1px solid; border-color: #000 #fff #fff #000; border-left-width: 2px; }
.head { display: flex; justify-content: space-between; height: 21px; border-bottom: 1px solid var(--shade); box-shadow: 0 1px #fff; }
.fields { padding: 19px 0 0 12px; }
.row { display: flex; align-items: flex-start; height: 27px; line-height: 22px; }
.r24 { height: 24px; }
.r29 { height: 29px; }
.r30 { height: 30px; }
.row label { width: 104px; }
.row input { width: 120px; height: 22px; padding: 0 5px 3px 0; text-align: right; margin-right: 9px; border: 1px solid; border-color: #404040 #fff #fff #404040; box-shadow: inset 1px 1px var(--shade); }

.wbar { flex: none; height: 27px; padding-bottom: 2px; display: flex; align-items: center; border-top: 1px solid #fff; }
.wbar .tb { width: 24px; }
.wbar .text { width: auto; padding: 0 6px 0 5px; gap: 2px; }
.wbar .dim { color: #909090; text-shadow: 1px 1px #fff; }
.query { flex: 1; min-width: 0; height: 18px; margin-left: 4px; border: 1px solid; border-color: #404040 #fff #fff #404040; box-shadow: inset 1px 1px var(--shade); }

/* docked views */
.dock { flex: none; display: flex; flex-direction: column; }
.narrow { width: 254px; }
.wide { width: 364px; }
.panel { min-height: 0; display: flex; flex-direction: column; padding: 4px 4px 4px 3px; border: 1px solid; border-color: #fff var(--shade) var(--shade) #fff; }
.wide .panel { padding-right: 2px; padding-left: 2px; border-right: 0; }
.p258 { flex: 249 1 0; }
.p242 { flex: 232 1 0; }
.p187 { flex: 177 1 0; }
.p240 { flex: 230 1 0; }
.p159 { flex: 149 1 0; }
.p165 { flex: 155 1 0; }
.p123 { flex: 113 1 0; }
.panel header { flex: none; display: flex; height: 11px; }
.panel header i { flex: 1; height: 6px; border-right: 1px solid var(--shade); background: linear-gradient(#fff 0 1px, #d4d0c8 1px 2px, #808080 2px 3px) 0 0 / 100% 3px; }
.panel header button { width: 14px; height: 11px; font-size: 9px; line-height: 9px; color: #405060; text-align: center; }
.face { flex: 1; min-height: 0; position: relative; display: flex; background: #000; color: #b8b8b8; border: 2px solid; border-color: var(--shade) #fff #fff var(--shade); border-top-color: #505050; overflow: hidden; }
.draw { flex: 1; min-width: 0; width: 100%; height: 100%; }
.draw text { font: 11px "Liberation Sans", Arial, sans-serif; text-anchor: middle; }
.lbl text { fill: #b0b0b0; }
.lbl rect { fill: #000; }
.ticks { fill: none; stroke: #d0d0d0; }
.hand { fill: none; stroke: #c0c0c0; stroke-linecap: round; }
.ring { fill: none; stroke: #c0c0c0; shape-rendering: crispEdges; }
.sats .g { fill: #00b400; }
.sats .r { fill: #c80000; }
.sats .b { fill: #0000b4; }
.sats .c { fill: #00b4c8; }
.sats .g text { fill: #a8f0a8; }
.sats .r text { fill: #f0b0b0; }
.sats .b text { fill: #a0a0f8; }
.sats .c text { fill: #c0f4ff; }
.star { fill: #000; stroke: #c0c0c0; }
.fill { fill: #c0c0c0; }
.tl, .tr, .bl, .br { position: absolute; }
.tl, .tr { top: 2px; }
.bl, .br { bottom: 1px; }
.tl, .bl { left: 2px; }
.tr { right: 0; }
.br { right: 2px; }
.inset { right: 5px; }
.mapface { flex-direction: column; padding: 5px 5px 4px; }
.map { min-height: 0; flex: 1; }
.map path, .map circle { fill: none; vector-effect: non-scaling-stroke; shape-rendering: crispEdges; }
.map .mgrid { stroke: #505050; stroke-dasharray: 4 3; }
.map .coast, .map .frame { stroke: #d0d0d0; }
.target { stroke: #20c030; }
.pos { flex: none; margin: 4px 0 0; line-height: 12px; }
.pos div { display: flex; justify-content: space-between; }
.pos dd { margin: 0; }
.dataface { padding: 5px 5px 0; }
.data { flex: 1; align-self: flex-start; border-collapse: collapse; line-height: 12px; table-layout: fixed; width: 100%; }
.data th { width: 65px; padding: 0; font-weight: normal; text-align: left; white-space: nowrap; }
.data td { height: 12px; padding: 0; background: linear-gradient(#404040, #404040) 0 0 / 100% 11px no-repeat; }
.data .v { text-align: right; white-space: nowrap; }
.data .fix { color: #20d020; }
.data .satrow { background: none; }
.rng { position: relative; display: flex; justify-content: space-between; }
.rng em { position: absolute; top: 0; height: 11px; font-style: normal; padding-left: 1px; border-left: 3px solid #10b010; }
.satbar { display: flex; gap: 3px; height: 10px; }
.satbar span { display: flex; gap: 1px; }
.satbar i { width: 4px; background: #00b400; }
.satbar .c { background: #10b4b4; }
.satbar .b { background: #0000a8; }

/* status bar */
.status { flex: none; height: 20px; display: flex; align-items: stretch; gap: 2px; padding: 2px 3px 0 2px; border-top: 1px solid #fff; line-height: 16px; }
.ready { flex: 1; }
.cell { flex: none; display: flex; align-items: center; padding-left: 3px; white-space: nowrap; overflow: hidden; border: 1px solid; border-color: var(--shade) #fff #fff var(--shade); }
.cell svg { margin: 0 1px 0 -2px; }
.w226 { width: 226px; }
.w116 { width: 116px; }
.w105 { width: 105px; }
.w126 { width: 126px; }
.w46 { width: 46px; }
.w20 { width: 20px; }
.gap10 { margin-left: 8px; }
.gap18 { margin-left: 16px; }
.size { flex: none; width: 14px; height: 14px; align-self: flex-end; }
```
